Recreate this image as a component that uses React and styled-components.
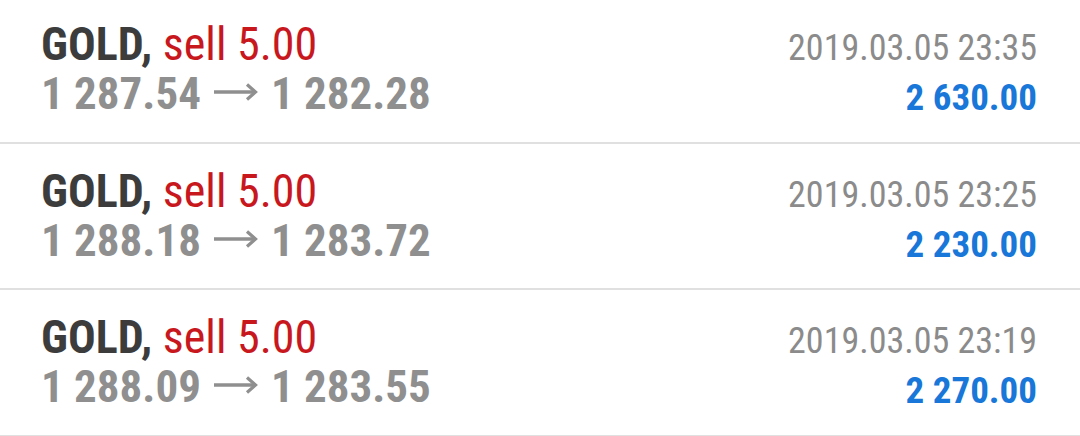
import styled, { createGlobalStyle } from "styled-components";

const Global = createGlobalStyle`
  html, body {
    margin: 0;
    padding: 0;
    background: #ffffff;
    overflow: hidden;
  }
  body {
    font-family: "Roboto Condensed", Roboto, "Liberation Sans", sans-serif;
    font-stretch: condensed;
  }
`;

const List = styled.div`
  width: 1080px;
  margin-top: -3px;
  display: flex;
  flex-direction: column;
`;

const Row = styled.div`
  height: 146.5px;
  flex: none;
  box-sizing: border-box;
  padding: 22px 43px 0 41px;
  display: flex;
  justify-content: space-between;
  align-items: baseline;
  border-bottom: 2px solid #e0e0e0;
`;

const Col = styled.div`
  display: flex;
  flex-direction: column;
  align-items: ${(p) => (p.$right ? "flex-end" : "flex-start")};
`;

const Line = styled.div`
  font-size: 46px;
  line-height: 50px;
  white-space: nowrap;
`;

const Symbol = styled.span`
  color: #3c3c3c;
  font-weight: 700;
`;

const Side = styled.span`
  color: #c8181e;
  font-weight: 400;
`;

const Prices = styled(Line)`
  font-size: 45px;
  color: #8f8f8f;
  font-weight: 700;
`;

const ArrowIcon = styled.svg`
  width: 46px;
  height: 22px;
  margin: 0 12px 0 12px;
  vertical-align: 6px;
`;

const Small = styled.div`
  line-height: 50px;
  white-space: nowrap;
`;

const Time = styled(Small)`
  font-size: 36px;
  color: #8b8b8b;
  font-weight: 400;
`;

const Profit = styled(Small)`
  font-size: 37px;
  color: #1877d8;
  font-weight: 700;
`;

function Arrow() {
  return (
    <ArrowIcon viewBox="0 0 46 22" fill="none" stroke="#8f8f8f" strokeLinecap="butt">
      <path d="M1 11 H42" strokeWidth="3.6" />
      <path d="M34 3.5 L42.5 11 L34 18.5" strokeWidth="3.2" />
    </ArrowIcon>
  );
}

const deals = [
  { open: "1 287.54", close: "1 282.28", time: "2019.03.05 23:35", profit: "2 630.00" },
  { open: "1 288.18", close: "1 283.72", time: "2019.03.05 23:25", profit: "2 230.00" },
  { open: "1 288.09", close: "1 283.55", time: "2019.03.05 23:19", profit: "2 270.00" },
];

export default function App() {
  return (
    <>
      <Global />
      <List>
        {deals.map((d) => (
          <Row key={d.time}>
            <Col>
              <Line>
                <Symbol>GOLD,</Symbol> <Side>sell 5.00</Side>
              </Line>
              <Prices>
                {d.open}
                <Arrow />
                {d.close}
              </Prices>
            </Col>
            <Col $right>
              <Time>{d.time}</Time>
              <Profit>{d.profit}</Profit>
            </Col>
          </Row>
        ))}
      </List>
    </>
  );
}
